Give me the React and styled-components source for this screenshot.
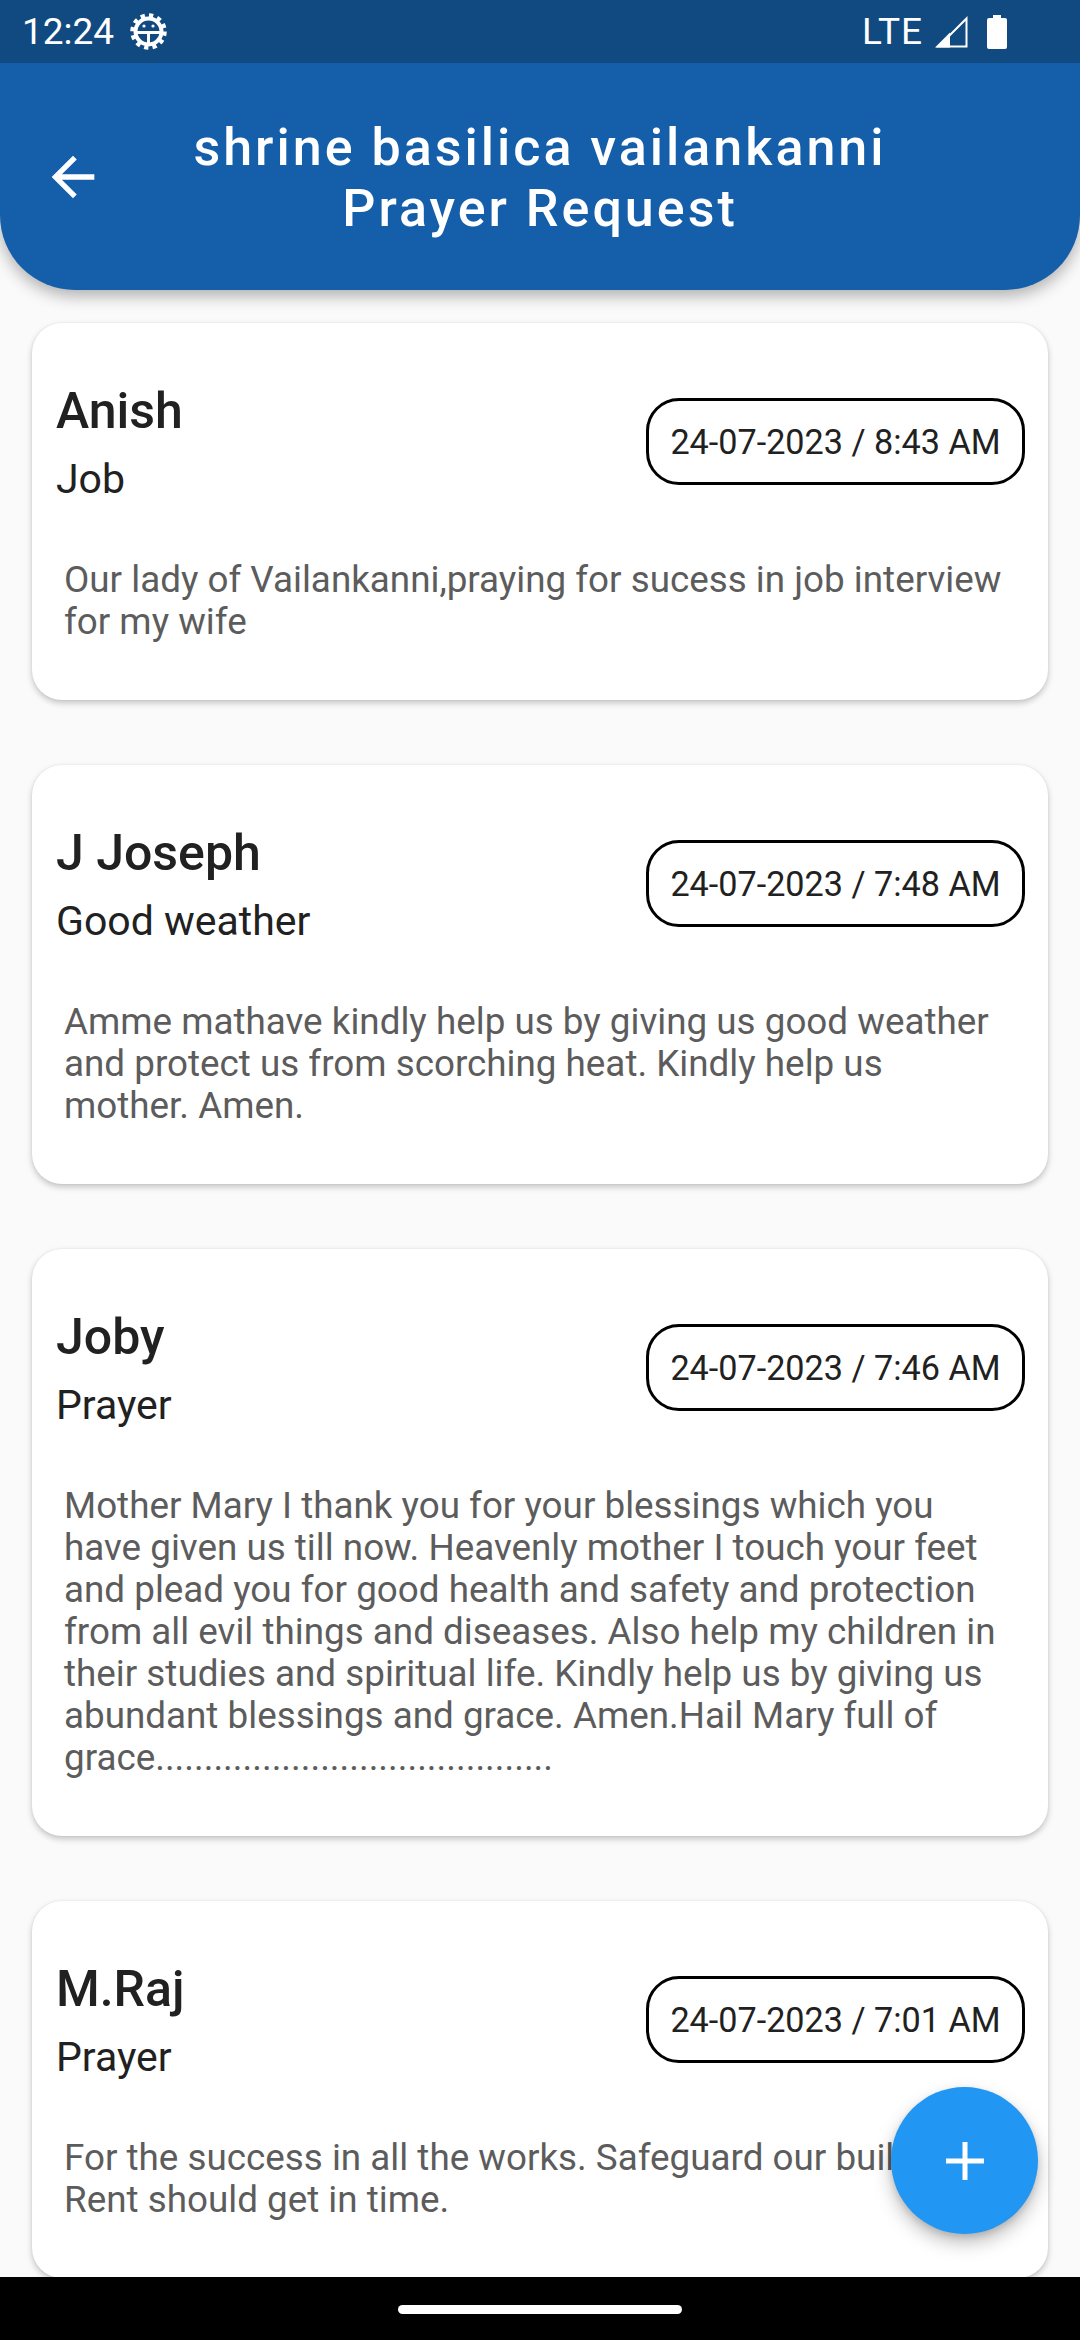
import React from 'react';
import styled, { createGlobalStyle } from 'styled-components';

const GlobalStyle = createGlobalStyle`
  html, body {
    margin: 0;
    padding: 0;
    background: #fafafa;
    font-family: Roboto, "Liberation Sans", sans-serif;
  }
`;

const Page = styled.div`
  position: relative;
  width: 1080px;
  height: 2340px;
  display: flex;
  flex-direction: column;
  overflow: hidden;
  background: #fafafa;
`;

const StatusBar = styled.div`
  flex: none;
  height: 63px;
  padding: 0 73px 0 22px;
  display: flex;
  align-items: center;
  justify-content: space-between;
  background: #114a80;
  color: #fff;
  font-size: 37px;
  position: relative;
  z-index: 3;
`;

const StatusGroup = styled.div`
  display: flex;
  align-items: center;
  gap: ${(p) => p.$gap}px;
`;

const LteLabel = styled.span`
  letter-spacing: 1px;
`;

const BatterySlot = styled.span`
  display: flex;
  margin-left: 7px;
`;

const Header = styled.header`
  flex: none;
  height: 227px;
  padding: 0 41px;
  display: flex;
  align-items: center;
  background: #155eaa;
  border-radius: 0 0 75px 75px;
  box-shadow: 0 6px 16px rgba(0, 0, 0, 0.3);
  position: relative;
  z-index: 2;
`;

const IconSlot = styled.div`
  flex: none;
  width: 64px;
  height: 64px;
  color: #fff;
`;

const Title = styled.h1`
  flex: 1;
  margin: 3px 0 0;
  color: #fff;
  font-size: 52px;
  font-weight: 500;
  line-height: 61px;
  letter-spacing: 3px;
  text-align: center;

  span {
    display: block;
  }
`;

const List = styled.main`
  flex: 1;
  min-height: 0;
  overflow: hidden;
  padding: 33px 32px 0;
  display: flex;
  flex-direction: column;
  gap: 65px;
`;

const Card = styled.article`
  flex: none;
  background: #fff;
  border-radius: 30px;
  box-shadow: 0 3px 6px rgba(0, 0, 0, 0.22), 0 0 2px rgba(0, 0, 0, 0.08);
  padding: 56px 23px 57px 24px;
`;

const CardTop = styled.div`
  display: flex;
  align-items: flex-start;
  justify-content: space-between;
`;

const Who = styled.div`
  margin-top: 2px;
  display: flex;
  flex-direction: column;
`;

const Name = styled.div`
  font-size: 50px;
  font-weight: 500;
  line-height: 60px;
  color: #212121;
`;

const Topic = styled.div`
  margin-top: 15px;
  font-size: 41px;
  line-height: 46px;
  color: #212121;
`;

const DateChip = styled.div`
  margin-top: 19px;
  width: 379px;
  height: 87px;
  box-sizing: border-box;
  border: 3px solid #000;
  border-radius: 33px;
  display: flex;
  align-items: center;
  justify-content: center;
  font-size: 34.200px;
  color: #212121;
  white-space: nowrap;
`;

const Body = styled.p`
  margin: 57px 16px 0 8px;
  font-size: 36.800px;
  line-height: 42px;
  color: #5c5c5c;
`;

const Fab = styled.button`
  position: absolute;
  left: 891px;
  top: 2087px;
  width: 147px;
  height: 147px;
  padding: 0;
  border: 0;
  border-radius: 50%;
  background: #2196f3;
  color: #fff;
  display: flex;
  align-items: center;
  justify-content: center;
  box-shadow: 0 9px 18px rgba(0, 0, 0, 0.25), 0 3px 6px rgba(0, 0, 0, 0.12);
  z-index: 2;
`;

const NavBar = styled.div`
  flex: none;
  height: 63px;
  background: #000;
  display: flex;
  align-items: center;
  justify-content: center;
  position: relative;
  z-index: 3;
`;

const NavPill = styled.div`
  width: 284px;
  height: 9px;
  margin-top: 1px;
  border-radius: 5px;
  background: #fff;
`;

const BackIcon = () => (
  <svg viewBox="0 0 24 24" width="64" height="64" fill="currentColor">
    <path d="M20 11H7.83l5.59-5.59L12 4l-8 8 8 8 1.41-1.41L7.83 13H20v-2z" />
  </svg>
);

const DebugIcon = () => (
  <svg viewBox="0 0 37 37" width="37" height="37" fill="none" stroke="#fff">
    <circle cx="18.5" cy="18.5" r="16" strokeWidth="4.5" strokeDasharray="4.2 4.18" />
    <circle cx="18.5" cy="18.5" r="13" strokeWidth="4" />
    <path d="M6 19.5H31M18.5 19.5V31" strokeWidth="3" />
    <circle cx="14" cy="13" r="1.6" fill="#fff" stroke="none" />
    <circle cx="23" cy="13" r="1.6" fill="#fff" stroke="none" />
  </svg>
);

const SignalIcon = () => (
  <svg viewBox="0 0 33 33" width="33" height="33">
    <path d="M31.5 3.5V31.5H3.5Z" fill="none" stroke="#fff" strokeWidth="2" />
    <path d="M0 32.5L15 17.5V32.5Z" fill="#fff" />
  </svg>
);

const BatteryIcon = () => (
  <svg viewBox="0 0 20 34" width="20" height="34" fill="#fff">
    <path d="M6 0h8v3h4a2 2 0 0 1 2 2v27a2 2 0 0 1-2 2H2a2 2 0 0 1-2-2V5a2 2 0 0 1 2-2h4z" />
  </svg>
);

const PlusIcon = () => (
  <svg viewBox="0 0 38 38" width="38" height="38" fill="#fff">
    <path d="M16.5 0h5v16.500h16.500v5H21.500v16.500h-5V21.500H0v-5h16.500z" />
  </svg>
);

const requests = [
  {
    name: 'Anish',
    topic: 'Job',
    date: '24-07-2023 / 8:43 AM',
    text: 'Our lady of Vailankanni,praying for sucess in job interview for my wife',
  },
  {
    name: 'J Joseph',
    topic: 'Good weather',
    date: '24-07-2023 / 7:48 AM',
    text: 'Amme mathave kindly help us by giving us good weather and protect us from scorching heat. Kindly help us mother. Amen.',
  },
  {
    name: 'Joby',
    topic: 'Prayer',
    date: '24-07-2023 / 7:46 AM',
    text: 'Mother Mary I thank you for your blessings which you have given us till now. Heavenly mother I touch your feet and plead you for good health and safety and protection from all evil things and diseases. Also help my children in their studies and spiritual life. Kindly help us by giving us abundant blessings and grace. Amen.Hail Mary full of grace.........................................',
  },
  {
    name: 'M.Raj',
    topic: 'Prayer',
    date: '24-07-2023 / 7:01 AM',
    text: 'For the success in all the works. Safeguard our building. Rent should get in time.',
  },
];

function App() {
  return (
    <Page>
      <GlobalStyle />
      <StatusBar>
        <StatusGroup $gap={16}>
          12:24
          <DebugIcon />
        </StatusGroup>
        <StatusGroup $gap={12}>
          <LteLabel>LTE</LteLabel>
          <SignalIcon />
          <BatterySlot><BatteryIcon /></BatterySlot>
        </StatusGroup>
      </StatusBar>
      <Header>
        <IconSlot><BackIcon /></IconSlot>
        <Title>
          <span>shrine basilica vailankanni</span>
          <span>Prayer Request</span>
        </Title>
        <IconSlot />
      </Header>
      <List>
        {requests.map((r) => (
          <Card key={r.name}>
            <CardTop>
              <Who>
                <Name>{r.name}</Name>
                <Topic>{r.topic}</Topic>
              </Who>
              <DateChip>{r.date}</DateChip>
            </CardTop>
            <Body>{r.text}</Body>
          </Card>
        ))}
      </List>
      <Fab aria-label="Add"><PlusIcon /></Fab>
      <NavBar><NavPill /></NavBar>
    </Page>
  );
}

export default App;
